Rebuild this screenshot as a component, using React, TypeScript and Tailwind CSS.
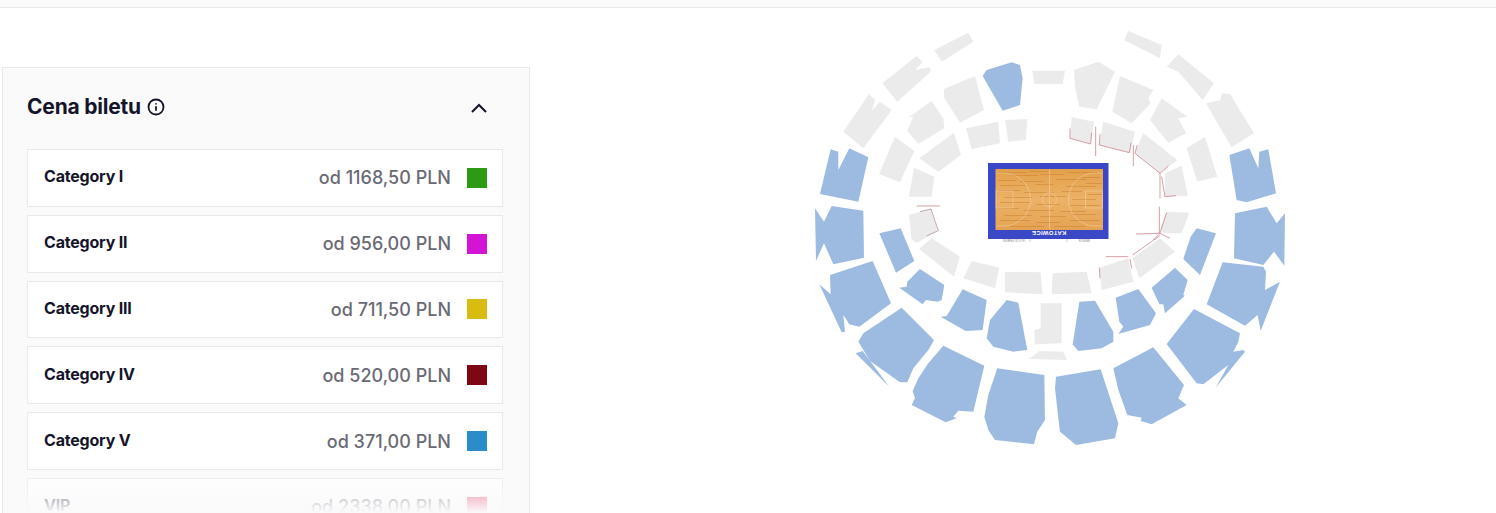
import React from "react";

const GRAY = "#ebebeb";
const BLUE = "#9dbbe1";
const RED = "#d08a90";

// seat blocks, points are in 3x coordinates of each quadrant of the map
const topLeftGray = [
  "403,90 505,38 520,65 425,125",
  "247,190 350,108 368,125 345,150 390,142 392,155 292,245",
  "130,335 207,222 225,240 215,272 240,245 275,270 190,385",
  "327,292 395,243 430,295 433,325 355,372 322,332 340,290",
  "432,207 525,168 552,270 480,308 432,232",
  "697,152 795,152 788,192 703,192",
  "285,350 343,393 300,487 237,462",
  "358,415 462,338 483,405 415,455",
  "498,325 595,305 600,370 515,387",
  "615,300 682,297 678,360 625,365",
  "342,443 403,470 395,530 327,530",
  "327,585 393,567 413,632 352,668 335,660",
];
const topLeftBlue = [
  "548,168 560,150 635,127 660,135 668,175 660,255 608,272",
  "60,522 92,388 115,395 115,450 148,385 205,412 175,545",
  "45,565 72,605 95,558 190,572 192,713 100,733 72,670 48,723",
  "238,640 302,625 343,723 288,758",
];
const topRightGray = [
  "222,60 235,33 335,75 330,115",
  "350,140 385,103 492,190 458,240 415,190 385,155",
  "468,250 512,240 515,220 540,222 612,340 545,382",
  "72,150 145,125 195,155 140,268 88,260 75,200",
  "210,168 310,210 295,235 302,250 245,310 187,275",
  "335,235 412,290 385,295 408,340 355,368 300,300",
  "410,385 465,350 502,470 442,485",
  "65,292 132,305 122,372 60,355",
  "160,305 255,335 240,398 148,375",
  "280,340 382,420 330,460 255,400",
  "345,460 395,437 413,527 345,530",
  "350,575 418,578 395,640 340,640 332,625",
];
const topRightBlue = ["538,405 598,385 625,445 628,395 655,388 678,520 590,547 560,540"];
const topRightRed = [
  "60,325 60,355 122,372 125,338",
  "137,320 137,408",
  "150,342 148,375 238,398 243,368",
  "250,375 250,438",
  "262,375 255,400 330,460 355,438",
  "330,460 330,535",
  "335,470 345,530 378,527",
  "328,560 328,640",
  "350,578 330,640 258,642",
  "310,660 330,640 360,655",
];
const bottomLeftGray = [
  "357,42 395,10 480,65 462,125",
  "515,78 598,98 585,160 490,130",
  "615,110 722,112 728,178 615,172",
  "722,205 785,205 785,325 705,328 703,285 722,280",
  "688,372 718,348 790,350 800,375",
];
const bottomLeftBlue = [
  "298,158 320,155 322,140 360,102 433,150 425,195 413,200 378,195 368,208",
  "488,163 560,195 548,285 497,288 422,245 440,243",
  "620,195 655,203 682,345 640,350 580,335 560,310 570,255",
  "58,148 92,178 90,120 218,78 273,205 178,275 148,268 130,240 135,290 125,292",
  "305,218 402,315 385,345 340,400 322,442 300,442 210,378 192,348 175,320 190,295",
  "167,355 188,348 268,455",
  "430,332 553,392 520,530 475,527 460,545 470,550 437,562 335,510 345,490 338,468 355,430 385,385",
  "592,400 733,420 735,555 712,590 702,628 585,615 565,585 553,545 565,480",
];
const bottomRightGray = [
  "148,98 235,70 250,140 155,165",
  "8,115 110,110 125,175 5,178",
  "268,130 248,70 330,10 375,50",
];
const bottomRightBlue = [
  "422,5 440,-20 498,-5 450,120 400,72",
  "555,-65 650,-85 680,-35 705,-65 703,92 672,50 640,90 552,70",
  "518,82 640,95 648,110 645,165 690,140 632,288 623,240 585,272 470,208",
  "305,158 375,98 413,135 400,180 405,182 345,235 340,208 328,208",
  "197,188 265,162 318,235 300,270 205,297 220,275 208,260",
  "88,200 135,197 190,290 190,320 155,340 85,348 68,328",
  "350,327 432,222 570,295 565,320 550,350 580,345 585,350 497,458 535,390 460,448 440,445",
  "190,400 310,337 402,450 385,490 410,510 305,568 272,558 275,548 232,540 205,465",
  "18,425 152,403 205,565 195,610 78,630 30,590 25,550 15,460",
];
const bottomRightRed = [
  "168,65 235,65",
  "240,72 245,100",
  "148,98 150,130",
  "248,60 330,2",
];

// darker grain on the parquet: x, y, width
const streaks = [
  [997, 172, 30], [1030, 171, 18], [1012, 175, 26], [1040, 174, 24], [1068, 172, 30], [1080, 177, 20],
  [998, 180, 18], [1020, 181, 24], [1056, 179, 30], [1086, 183, 16], [1000, 185, 26],
  [1036, 184, 18], [1066, 186, 30], [998, 190, 22], [1024, 192, 30], [1062, 191, 20],
  [1088, 194, 14], [1004, 197, 28], [1040, 196, 26], [1072, 199, 24], [1000, 202, 30],
  [1036, 204, 24], [1070, 205, 30], [997, 208, 22], [1024, 210, 30], [1060, 211, 26],
  [1004, 215, 28], [1040, 216, 26], [1072, 214, 24], [1000, 220, 30], [1036, 222, 24],
  [1070, 220, 30], [1010, 226, 34], [1054, 226, 30],
];

const categories = [
  { name: "Category I", price: "od 1168,50 PLN", color: "bg-[#2d9a14]" },
  { name: "Category II", price: "od 956,00 PLN", color: "bg-[#d414d4]" },
  { name: "Category III", price: "od 711,50 PLN", color: "bg-[#d8bc10]" },
  { name: "Category IV", price: "od 520,00 PLN", color: "bg-[#7d0712]" },
  { name: "Category V", price: "od 371,00 PLN", color: "bg-[#2a8cc8]" },
  { name: "VIP", price: "od 2338,00 PLN", color: "bg-[#e8486c]" },
];

function Blocks({ list, fill }: { list: string[]; fill: string }) {
  return (
    <>
      {list.map((points) => (
        <polygon key={points} points={points} fill={fill} />
      ))}
    </>
  );
}

function Lines({ list }: { list: string[] }) {
  return (
    <>
      {list.map((points) => (
        <polyline key={points} points={points} fill="none" stroke={RED} strokeWidth="2.5" />
      ))}
    </>
  );
}

function ArenaMap() {
  return (
    <svg viewBox="800 20 500 440" className="ml-[270px] mt-3 h-[440px] w-[500px] flex-none">
      <g transform="translate(800 20) scale(0.3333)">
        <Blocks list={topLeftGray} fill={GRAY} />
        <Blocks list={topLeftBlue} fill={BLUE} />
        <polyline points="350,558 420,558" fill="none" stroke={RED} strokeWidth="2.5" />
        <polyline points="360,575 393,567 415,632 380,648" fill="none" stroke="#b89a9c" strokeWidth="2.5" />
      </g>
      <g transform="translate(1050 20) scale(0.3333)">
        <Blocks list={topRightGray} fill={GRAY} />
        <Blocks list={topRightBlue} fill={BLUE} />
        <Lines list={topRightRed} />
      </g>
      <g transform="translate(800 235) scale(0.3333)">
        <Blocks list={bottomLeftGray} fill={GRAY} />
        <Blocks list={bottomLeftBlue} fill={BLUE} />
      </g>
      <g transform="translate(1050 235) scale(0.3333)">
        <Blocks list={bottomRightGray} fill={GRAY} />
        <Blocks list={bottomRightBlue} fill={BLUE} />
        <Lines list={bottomRightRed} />
      </g>

      <defs>
        <linearGradient id="wood" x1="0" y1="0" x2="0" y2="1">
          <stop offset="0" stopColor="#e2a04a" />
          <stop offset="0.5" stopColor="#ecb267" />
          <stop offset="1" stopColor="#e4a352" />
        </linearGradient>
      </defs>
      <rect x="988" y="163" width="120.5" height="76" fill="#3a47c6" />
      <rect x="995.5" y="169" width="107.5" height="61" fill="url(#wood)" />
      {streaks.map(([x, y, w]) => (
        <rect key={`${x}-${y}`} x={x} y={y} width={w} height="1" fill="#c87a2c" opacity="0.45" />
      ))}
      <g fill="none" stroke="#f6e2c6" strokeWidth="0.5" opacity="0.8">
        <line x1="1049.5" y1="169.5" x2="1049.5" y2="229.5" />
        <circle cx="1049.5" cy="199.5" r="7" />
        <path d="M996 173 H1004 A26.500 26.500 0 0 1 1004 226 H996" />
        <path d="M1102.500 173 H1095 A26.500 26.500 0 0 0 1095 226 H1102.500" />
        <rect x="996" y="191" width="17" height="17" />
        <rect x="1085.500" y="191" width="17" height="17" />
      </g>
      <text
        x="1049"
        y="236"
        transform="rotate(180 1049 233.500)"
        textAnchor="middle"
        fontSize="6"
        fontWeight="700"
        fill="#ffffff"
        fontFamily="'Liberation Sans', sans-serif"
        letterSpacing="0.3"
      >
        KATOWICE
      </text>
      <g fontSize="3.5" fill="#8a8a8a" fontFamily="'Liberation Sans', sans-serif" textAnchor="middle">
        <text x="1014" y="241.500" transform="rotate(180 1014 240.300)">
          GOODYEARS
        </text>
        <text x="1084" y="241.500" transform="rotate(180 1084 240.300)">
          MINUS
        </text>
      </g>
      <line x1="1030" y1="239" x2="1030" y2="242" stroke="#9a9a9a" strokeWidth="0.5" />
      <line x1="1067" y1="239" x2="1067" y2="242" stroke="#9a9a9a" strokeWidth="0.5" />
    </svg>
  );
}

function PricePanel() {
  return (
    <div className="relative ml-[2px] mt-[59px] h-[600px] w-[528px] flex-none border border-[#e9e9ec] bg-[#fafafb] pl-[24px] pr-[26px]">
      <div className="flex h-[81px] items-center justify-between pb-[3px]">
        <div className="flex items-center gap-[6px]">
          <h2 className="text-[21px] font-bold tracking-[-0.2px] text-[#14142b]">Cena biletu</h2>
          <svg viewBox="0 0 24 24" className="h-[18px] w-[18px]" fill="none" stroke="#14142b" strokeWidth="2.4">
            <circle cx="12" cy="12" r="10" />
            <line x1="12" y1="11" x2="12" y2="17" />
            <line x1="12" y1="7" x2="12" y2="8.500" />
          </svg>
        </div>
        <svg viewBox="0 0 16 10" className="mr-[16px] mt-[2px] h-[10px] w-[16px]" fill="none" stroke="#14142b" strokeWidth="2">
          <path d="M1 9 L8 2 L15 9" />
        </svg>
      </div>
      <ul className="flex flex-col gap-2">
        {categories.map((c) => (
          <li
            key={c.name}
            className="flex h-[57.8px] items-center justify-between border border-[#e9e9ec] bg-white pl-4 pr-[15px]"
          >
            <span className="mb-[3px] text-[16px] font-bold tracking-[-0.2px] text-[#14142b]">{c.name}</span>
            <div className="flex items-center gap-4">
              <span className="text-[18px] font-medium text-[#6a6a74]">{c.price}</span>
              <span className={`h-5 w-5 ${c.color}`} />
            </div>
          </li>
        ))}
      </ul>
      <div className="absolute left-0 right-0 top-[395px] h-[50px] bg-gradient-to-b from-transparent to-[#fafafb]" />
    </div>
  );
}

export default function App() {
  return (
    <div className="h-[513px] w-[1496px] overflow-hidden bg-white font-['Inter',sans-serif]">
      <div className="h-2 border-b border-[#e9e9ec] bg-[#fafafa]" />
      <div className="flex items-start">
        <PricePanel />
        <ArenaMap />
      </div>
    </div>
  );
}
